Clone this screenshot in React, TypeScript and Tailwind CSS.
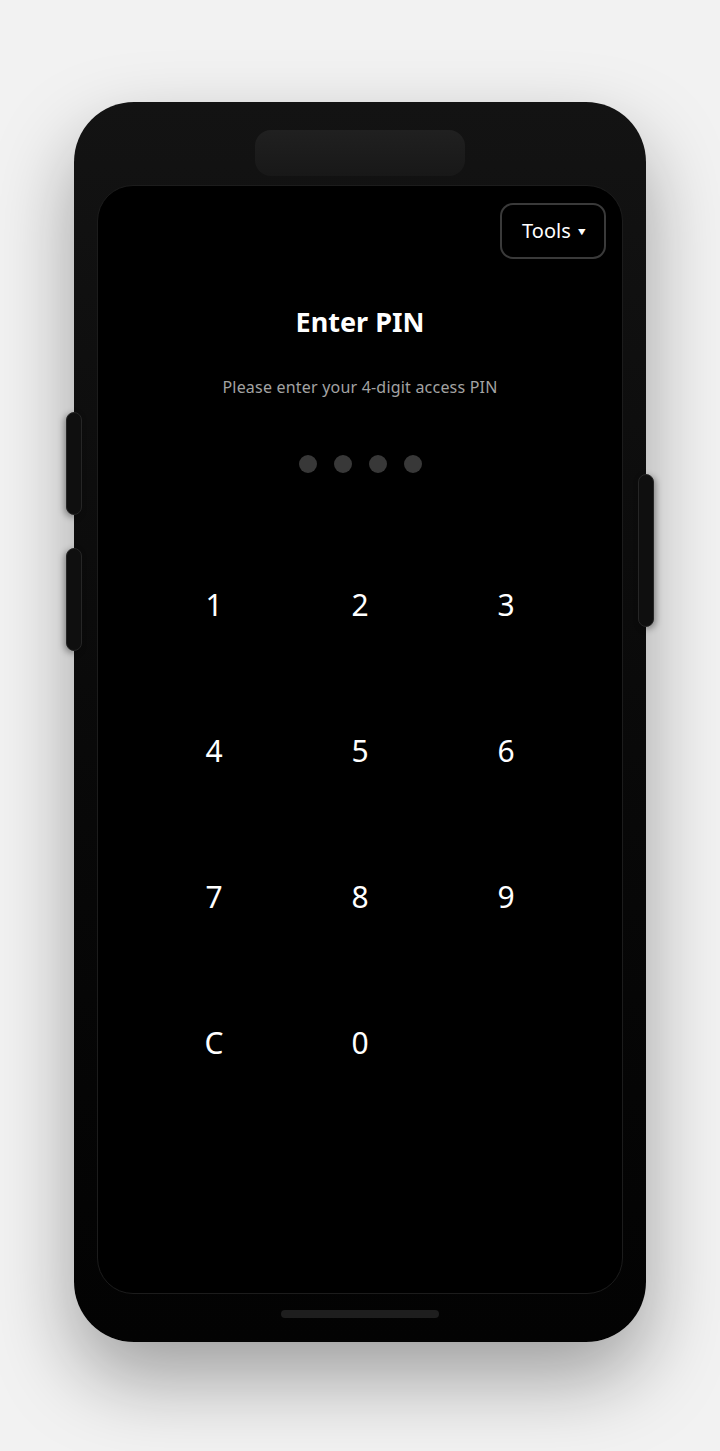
import React from "react";

const keys = ["1", "2", "3", "4", "5", "6", "7", "8", "9", "C", "0", ""];

export default function App() {
  return (
    <div
      className="min-h-[1451px] w-full bg-[#f2f2f2] flex justify-center pt-[102px]"
      style={{ fontFamily: '"Noto Sans", Inter, sans-serif' }}
    >
      <div className="relative w-[572px] h-[1240px] rounded-[60px] bg-gradient-to-b from-[#131313] to-[#030303] shadow-[0_36px_80px_rgba(0,0,0,0.35)]">
        {/* side buttons */}
        <div className="absolute left-[-8px] top-[310px] w-[16px] h-[103px] rounded-full bg-[#0f0f0f] border border-[#262626] shadow-[-2px_2px_6px_rgba(0,0,0,0.35)]" />
        <div className="absolute left-[-8px] top-[446px] w-[16px] h-[103px] rounded-full bg-[#0f0f0f] border border-[#262626] shadow-[-2px_2px_6px_rgba(0,0,0,0.35)]" />
        <div className="absolute right-[-8px] top-[372px] w-[16px] h-[153px] rounded-full bg-[#0f0f0f] border border-[#262626] shadow-[2px_2px_6px_rgba(0,0,0,0.35)]" />

        <div className="flex flex-col items-center h-full">
          {/* notch */}
          <div className="mt-[28px] w-[210px] h-[46px] rounded-[16px] bg-gradient-to-b from-[#202020] to-[#181818]" />
          {/* screen */}
          <div className="mt-[9px] w-[526px] h-[1109px] rounded-[36px] bg-black border border-[#1c1c1c] flex flex-col items-center">
            <div className="w-full flex justify-end pt-[17px] pr-[16px]">
              <button className="w-[106px] h-[56px] rounded-[13px] border-2 border-[#3a3a3a] text-white text-[20px] flex items-center justify-center gap-[7px] pl-[2px]">
                <span>Tools</span>
                <span className="text-[8px] mt-[1px]">▼</span>
              </button>
            </div>
            <h1 className="mt-[46px] text-white text-[27px] font-bold leading-[34px]">Enter PIN</h1>
            <p className="mt-[38px] text-[#a3a3a3] text-[16px] tracking-[0.2px] leading-[20px]">
              Please enter your 4-digit access PIN
            </p>
            <div className="mt-[58px] flex gap-[17px]">
              {[0, 1, 2, 3].map((i) => (
                <div key={i} className="w-[18px] h-[18px] rounded-full bg-[#383838]" />
              ))}
            </div>
            <div className="mt-[59px] w-[438px] grid grid-cols-3">
              {keys.map((k, i) => (
                <div key={i} className="h-[146px] flex items-center justify-center text-white text-[30px] leading-none">
                  {k}
                </div>
              ))}
            </div>
          </div>
          {/* home indicator */}
          <div className="mt-[16px] w-[158px] h-[8px] rounded-full bg-[#1e1e1e]" />
        </div>
      </div>
    </div>
  );
}
